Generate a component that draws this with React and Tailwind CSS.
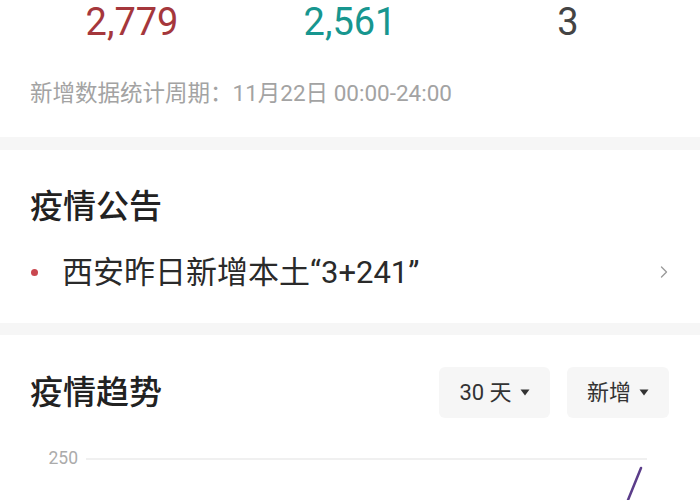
import { ChevronRight } from 'lucide-react';

const stats = [
    { value: '2,779', color: 'text-[#a5373c]' },
    { value: '2,561', color: 'text-[#17968f]' },
    { value: '3', color: 'text-[#444444]' },
];

const Caret = () => (
    <svg width="10" height="7" viewBox="0 0 10 7" className="ml-2">
        <path d="M0.5 0.5 L9.5 0.5 L5 6.5 Z" fill="#333" />
    </svg>
);

const App = () => {
    return (
        <div className="w-[700px] h-[500px] overflow-hidden bg-white font-['Roboto','Noto_Sans_CJK_SC',sans-serif]">
            {/* summary numbers */}
            <div className="h-[137px]">
                <div className="grid grid-cols-3 px-[23px] h-[44px] items-center">
                    {stats.map((s) => (
                        <div key={s.value} className={`text-center text-[38px] leading-none ${s.color}`}>
                            {s.value}
                        </div>
                    ))}
                </div>
                <p className="mt-[38px] pl-[30px] text-[22.5px] leading-none text-[#a3a3a3]">
                    新增数据统计周期：11月22日 00:00-24:00
                </p>
            </div>

            <div className="h-[13px] bg-[#f6f6f6]" />

            {/* notices */}
            <div className="h-[173px] px-[30px] pt-[35px]">
                <h2 className="text-[33px] leading-[44px] font-medium text-[#222]">疫情公告</h2>
                <div className="mt-[23px] flex items-center h-[40px]">
                    <span className="w-[7px] h-[7px] rounded-full bg-[#c9474f] ml-[1px]" />
                    <span className="ml-[24px] text-[31px] text-[#2a2a2a] leading-none">西安昨日新增本土“3+241”</span>
                    <ChevronRight className="ml-auto mr-[-4px] text-[#9a9a9a]" size={20} strokeWidth={1.6} />
                </div>
            </div>

            <div className="h-[12px] bg-[#f6f6f6]" />

            {/* trend */}
            <div className="px-[30px] pt-[32px]">
                <div className="flex items-center justify-between">
                    <h2 className="text-[33px] leading-[44px] font-medium text-[#222]">疫情趋势</h2>
                    <div className="flex gap-[17px] mr-[1px]">
                        <div className="w-[111px] h-[51px] rounded-md bg-[#f6f6f6] flex items-center justify-center text-[22px] text-[#333]">
                            30 天<Caret />
                        </div>
                        <div className="w-[102px] h-[51px] rounded-md bg-[#f6f6f6] flex items-center justify-center text-[22px] text-[#333]">
                            新增<Caret />
                        </div>
                    </div>
                </div>
                <div className="relative mt-[32px] h-[120px]">
                    <div className="flex items-center">
                        <span className="w-[48px] text-right text-[17.5px] text-[#ababab] leading-none">250</span>
                        <div className="ml-[8px] w-[561px] h-[2px] bg-[#f0f0f0]" />
                    </div>
                    <div className="flex items-center mt-[42px]">
                        <span className="w-[48px] text-right text-[17.5px] text-[#ababab] leading-none">200</span>
                        <div className="ml-[8px] w-[561px] h-[2px] bg-[#f0f0f0]" />
                    </div>
                    <svg className="absolute left-0 top-0" width="640" height="120">
                        <polyline points="611,18 598,50 588,80" fill="none" stroke="#5b3d8a" strokeWidth="2.5" strokeLinecap="round" />
                    </svg>
                </div>
            </div>
        </div>
    );
};

export default App;
